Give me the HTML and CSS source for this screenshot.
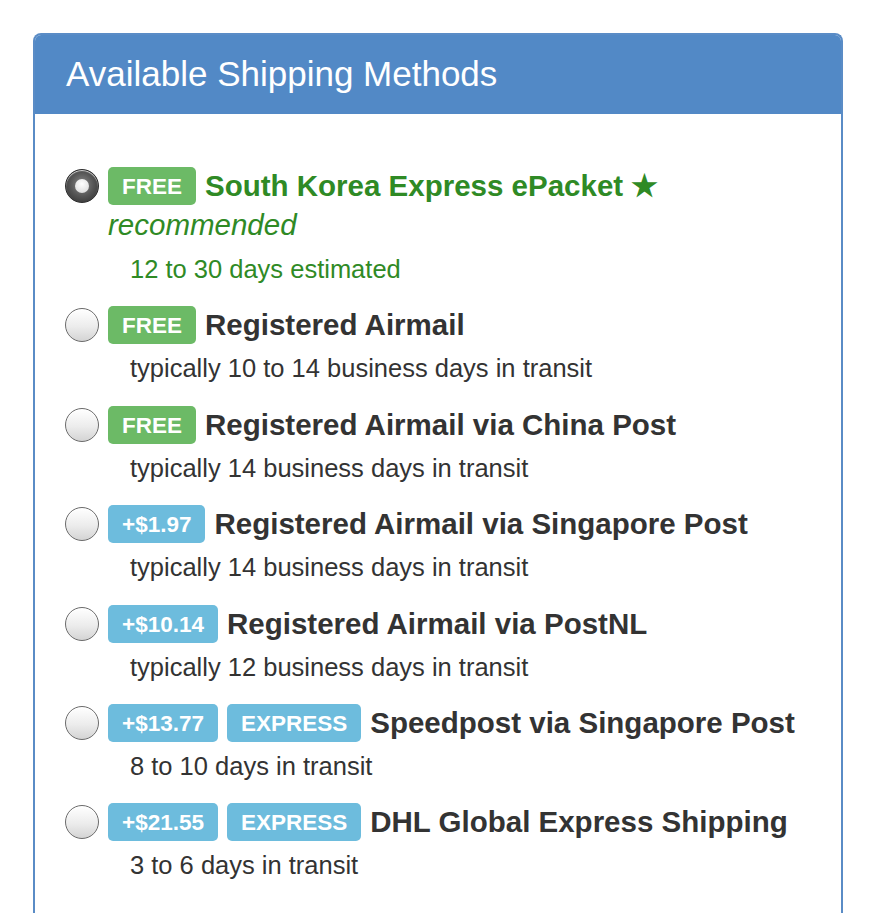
FILE: index.html
```html
<!DOCTYPE html>
<html lang="en">

<head>
    <meta charset="UTF-8">
    <meta name="viewport" content="width=device-width, initial-scale=1.0">
    <title>Shipping Methods</title>
    <link rel="stylesheet" href="styles.css">
</head>

<body>
    <div class="panel">
        <div class="panel-heading">Available Shipping Methods</div>
        <div class="panel-body">
            <label class="method">
                <span class="radio checked"></span>
                <div class="method-info">
                    <div class="method-title recommended-title">
                        <span class="badge badge-free">FREE</span>
                        <span class="name">South Korea Express ePacket ★</span>
                    </div>
                    <div class="recommended">recommended</div>
                    <div class="transit estimate">12 to 30 days estimated</div>
                </div>
            </label>

            <label class="method">
                <span class="radio"></span>
                <div class="method-info">
                    <div class="method-title">
                        <span class="badge badge-free">FREE</span>
                        <span class="name">Registered Airmail</span>
                    </div>
                    <div class="transit">typically 10 to 14 business days in transit</div>
                </div>
            </label>

            <label class="method">
                <span class="radio"></span>
                <div class="method-info">
                    <div class="method-title">
                        <span class="badge badge-free">FREE</span>
                        <span class="name">Registered Airmail via China Post</span>
                    </div>
                    <div class="transit">typically 14 business days in transit</div>
                </div>
            </label>

            <label class="method">
                <span class="radio"></span>
                <div class="method-info">
                    <div class="method-title">
                        <span class="badge badge-info">+$1.97</span>
                        <span class="name">Registered Airmail via Singapore Post</span>
                    </div>
                    <div class="transit">typically 14 business days in transit</div>
                </div>
            </label>

            <label class="method">
                <span class="radio"></span>
                <div class="method-info">
                    <div class="method-title">
                        <span class="badge badge-info">+$10.14</span>
                        <span class="name">Registered Airmail via PostNL</span>
                    </div>
                    <div class="transit">typically 12 business days in transit</div>
                </div>
            </label>

            <label class="method">
                <span class="radio"></span>
                <div class="method-info">
                    <div class="method-title">
                        <span class="badge badge-info">+$13.77</span>
                        <span class="badge badge-info">EXPRESS</span>
                        <span class="name">Speedpost via Singapore Post</span>
                    </div>
                    <div class="transit">8 to 10 days in transit</div>
                </div>
            </label>

            <label class="method">
                <span class="radio"></span>
                <div class="method-info">
                    <div class="method-title">
                        <span class="badge badge-info">+$21.55</span>
                        <span class="badge badge-info">EXPRESS</span>
                        <span class="name">DHL Global Express Shipping</span>
                    </div>
                    <div class="transit">3 to 6 days in transit</div>
                </div>
            </label>
        </div>
    </div>
</body>

</html>
```

FILE: styles.css
```css
body {
    margin: 0;
    background-color: #fff;
    font-family: 'Liberation Sans', Arial, Helvetica, sans-serif;
    color: #333;
}

.panel {
    margin: 33px 32px 0 33px;
    border: 2px solid #5a8cc6;
    border-bottom: none;
    border-radius: 8px 8px 0 0;
    height: 900px;
}

.panel-heading {
    background-color: #5289c6;
    color: #fff;
    font-size: 35px;
    height: 79px;
    line-height: 78px;
    padding-left: 31px;
    border-radius: 6px 6px 0 0;
}

.panel-body {
    padding: 52px 30px 0 30px;
}

.method {
    display: flex;
    align-items: flex-start;
    margin-bottom: 22.4px;
    cursor: pointer;
}

.radio {
    flex: none;
    width: 32px;
    height: 32px;
    margin-top: 3px;
    margin-right: 9px;
    border: 1px solid #6b6b6b;
    border-radius: 50%;
    background: linear-gradient(to bottom, #ffffff 0%, #ececec 55%, #d4d4d4 100%);
    box-shadow: inset 0 1px 1px rgba(255, 255, 255, 0.8);
    position: relative;
}

.radio.checked {
    border-color: #2c2c2c;
    background: radial-gradient(circle at 50% 45%, #8a8a8a 0%, #555 50%, #2a2a2a 100%);
}

.radio.checked::after {
    content: "";
    position: absolute;
    left: 9px;
    top: 9px;
    width: 14px;
    height: 14px;
    border-radius: 50%;
    background: radial-gradient(circle at 50% 35%, #ffffff 0%, #e2e2e2 70%, #bdbdbd 100%);
}

.method-title {
    display: flex;
    align-items: center;
    height: 40px;
    white-space: nowrap;
}

.badge {
    display: inline-block;
    height: 38px;
    line-height: 39px;
    padding: 0 14px;
    margin-right: 9px;
    border-radius: 5px;
    color: #fff;
    font-size: 22.5px;
    font-weight: bold;
}

.badge-free {
    background-color: #6cba66;
}

.badge-info {
    background-color: #6dbcdd;
}

.name {
    font-size: 29.5px;
    font-weight: bold;
    color: #333;
}

.recommended-title .name {
    color: #2f8a25;
}

.recommended {
    color: #2f8a25;
    font-style: italic;
    font-size: 29.5px;
    line-height: 36px;
    margin-top: 1px;
}

.transit {
    margin-top: 9px;
    padding-left: 22px;
    font-size: 25.5px;
    line-height: 28px;
}

.estimate {
    margin-top: 12px;
    color: #2f8a25;
}
```
